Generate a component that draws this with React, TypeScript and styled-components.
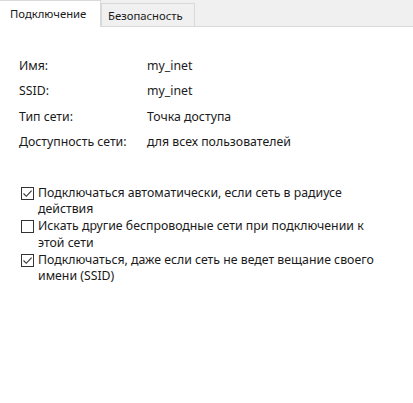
import { FC } from 'react';
import styled, { createGlobalStyle } from 'styled-components';

const GlobalStyle = createGlobalStyle`
  html, body {
    margin: 0;
    padding: 0;
    background: #ffffff;
  }
  body {
    font-family: 'Noto Sans', 'DejaVu Sans', sans-serif;
    font-size: 12.3px;
    color: #1a1a1a;
  }
`;

const info = [
  { label: 'Имя:', value: 'my_inet' },
  { label: 'SSID:', value: 'my_inet' },
  { label: 'Тип сети:', value: 'Точка доступа' },
  { label: 'Доступность сети:', value: 'для всех пользователей' },
];

const options = [
  { text: 'Подключаться автоматически, если сеть в радиусе действия', checked: true },
  { text: 'Искать другие беспроводные сети при подключении к этой сети', checked: false },
  { text: 'Подключаться, даже если сеть не ведет вещание своего имени (SSID)', checked: true },
];

const App: FC = () => (
  <>
    <GlobalStyle />
    <Window>
      <TabStrip>
        <Tab active>Подключение</Tab>
        <Tab>Безопасность</Tab>
      </TabStrip>
      <Panel>
        <InfoGrid>
          {info.map(({ label, value }) => (
            <InfoRow key={label}>
              <Label>{label}</Label>
              <Value>{value}</Value>
            </InfoRow>
          ))}
        </InfoGrid>
        <Options>
          {options.map(({ text, checked }) => (
            <Option key={text}>
              <Box>
                {checked && (
                  <svg width="11" height="11" viewBox="0 0 11 11">
                    <path d="M1.5 5.5 L4.3 8.3 L9.6 2.6" fill="none" stroke="#333" strokeWidth="1.1" />
                  </svg>
                )}
              </Box>
              <OptionText>{text}</OptionText>
            </Option>
          ))}
        </Options>
      </Panel>
    </Window>
  </>
);

export default App;

const Window = styled.div`
  width: 413px;
  height: 403px;
  background: #ffffff;
`;

const TabStrip = styled.div`
  display: flex;
  align-items: flex-end;
  height: 26px;
  background: #f0f0f0;
  border-bottom: 1px solid #d9d9d9;
`;

const Tab = styled.div<{ active?: boolean }>`
  box-sizing: border-box;
  display: flex;
  align-items: center;
  height: ${({ active }) => (active ? '27px' : '23px')};
  margin-bottom: ${({ active }) => (active ? '-1px' : '0')};
  padding: ${({ active }) => (active ? '0 0 2px 10px' : '1px 0 0 6px')};
  background: ${({ active }) => (active ? '#ffffff' : '#f0f0f0')};
  border: 1px solid #d9d9d9;
  border-bottom: none;
  border-left: ${({ active }) => (active ? 'none' : '1px solid #d9d9d9')};
  width: ${({ active }) => (active ? '101px' : '94px')};
  font-size: 11.3px;
  white-space: nowrap;
`;

const Panel = styled.div`
  padding: 30px 0 0 19px;
`;

const InfoGrid = styled.div`
  display: flex;
  flex-direction: column;
  gap: 8.3px;
`;

const InfoRow = styled.div`
  display: grid;
  grid-template-columns: 128px 1fr;
  line-height: 17px;
`;

const Label = styled.span``;

const Value = styled.span``;

const Options = styled.div`
  display: flex;
  flex-direction: column;
  gap: 0.5px;
  margin-top: 35px;
  padding-left: 2px;
  width: 362px;
`;

const Option = styled.div`
  display: flex;
  align-items: flex-start;
  gap: 4px;
`;

const Box = styled.span`
  box-sizing: border-box;
  flex: none;
  display: flex;
  align-items: center;
  justify-content: center;
  width: 13px;
  height: 13px;
  margin-top: 2px;
  border: 1px solid #333333;
  background: #ffffff;
`;

const OptionText = styled.span`
  line-height: 16.5px;
`;
